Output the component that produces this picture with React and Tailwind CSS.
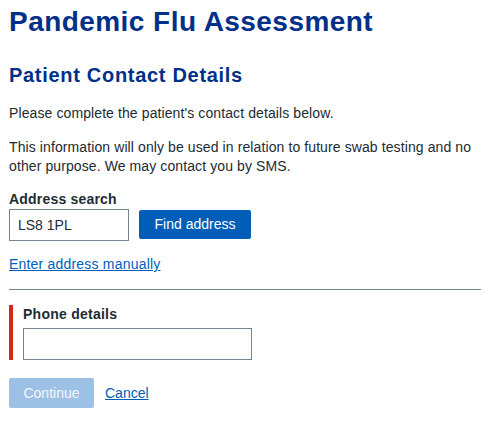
import React, { useState } from 'react';

const App = () => {
  const [postcode, setPostcode] = useState('LS8 1PL');
  const [phone, setPhone] = useState('');

  return (
    <div className="min-h-screen bg-white pl-[9px] pr-[14px] font-['Liberation_Sans',Arial,sans-serif] text-[#212b32]">
      <h1 className="pt-[5px] text-[28px] font-bold leading-[34px] tracking-[0.45px] text-[#003087]">
        Pandemic Flu Assessment
      </h1>
      <h2 className="mt-[24px] text-[20px] font-bold leading-[24px] tracking-[0.7px] text-[#003087]">
        Patient Contact Details
      </h2>
      <p className="mt-[17px] text-[14px] leading-[19px] tracking-[0.1px]">
        Please complete the patient's contact details below.
      </p>
      <p className="mt-[15px] text-[14px] leading-[19px] tracking-[0.1px]">
        This information will only be used in relation to future swab testing and no other purpose. We may contact you by SMS.
      </p>

      <label className="mt-[14px] block text-[14px] font-bold leading-[19px] tracking-[0.2px]">
        Address search
      </label>
      <div className="flex items-start gap-[10px]">
        <input
          value={postcode}
          onChange={(e) => setPostcode(e.target.value)}
          className="h-[32px] w-[120px] border border-[#768692] px-[8px] text-[14px] text-[#212b32] outline-none"
        />
        <button className="mt-px h-[29px] w-[112px] rounded-[2px] bg-[#005eb8] text-[14px] text-white">
          Find address
        </button>
      </div>
      <a href="#" className="mt-[14px] block w-fit text-[14px] leading-[19px] tracking-[0.2px] text-[#005eb8] underline">
        Enter address manually
      </a>

      <hr className="mt-[15px] border-t border-[#768692]" />

      <div className="mt-[15px] border-l-4 border-[#d5281b] pl-[10px]">
        <label className="block text-[14px] font-bold leading-[19px] tracking-[0.25px]">
          Phone details
        </label>
        <input
          value={phone}
          onChange={(e) => setPhone(e.target.value)}
          className="mt-[4px] block h-[32px] w-[229px] border border-[#768692] px-[8px] text-[14px] outline-none"
        />
      </div>

      <div className="mt-[18px] flex items-center gap-[11px]">
        <button className="h-[30px] w-[85px] rounded-[2px] bg-[#9dc0e5] text-[14px] text-[#f4f8fc]">
          Continue
        </button>
        <a href="#" className="text-[14px] text-[#005eb8] underline">
          Cancel
        </a>
      </div>
    </div>
  );
};

export default App;
